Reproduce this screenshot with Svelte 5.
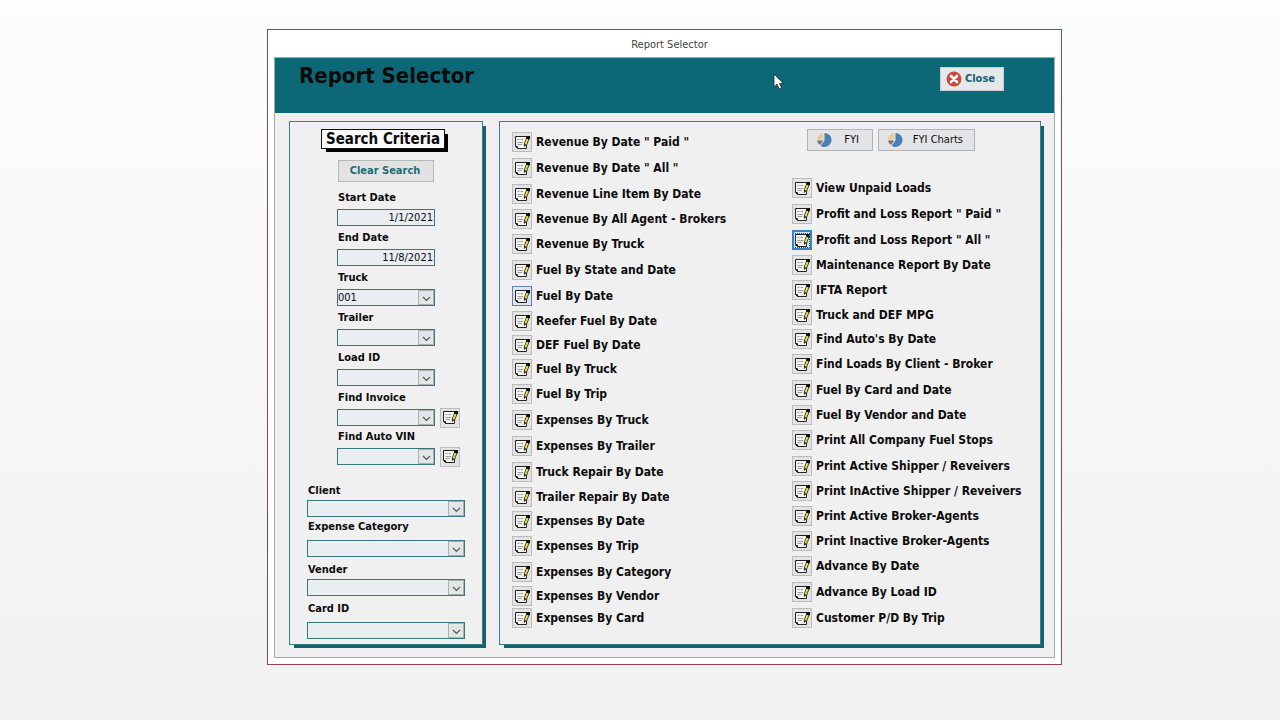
<script>
  const filters = [
    { id: 'start', label: 'Start Date', date: '1/1/2021' },
    { id: 'end', label: 'End Date', date: '11/8/2021' },
    { id: 'truck', label: 'Truck', value: '001' },
    { id: 'trailer', label: 'Trailer', value: '' },
    { id: 'load', label: 'Load ID', value: '' },
    { id: 'invoice', label: 'Find Invoice', value: '', find: true },
    { id: 'vin', label: 'Find Auto VIN', value: '', find: true }
  ];

  const categories = [
    { id: 'client', label: 'Client' },
    { id: 'category', label: 'Expense Category', loose: true },
    { id: 'vender', label: 'Vender' },
    { id: 'card', label: 'Card ID', loose: true }
  ];

  // h is the row density: n = normal, t = tight, x = extra tight
  const left = [
    { t: 'Revenue By Date " Paid "', h: 'n' },
    { t: 'Revenue By Date " All "', h: 'n' },
    { t: 'Revenue Line Item By Date', h: 'n' },
    { t: 'Revenue By All Agent - Brokers', h: 't' },
    { t: 'Revenue By Truck', h: 'n' },
    { t: 'Fuel By State and Date', h: 'n' },
    { t: 'Fuel By Date', h: 'n', state: 'recent' },
    { t: 'Reefer Fuel By Date', h: 't' },
    { t: 'DEF Fuel By Date', h: 't' },
    { t: 'Fuel By Truck', h: 't' },
    { t: 'Fuel By Trip', h: 'n' },
    { t: 'Expenses By Truck', h: 'n' },
    { t: 'Expenses By Trailer', h: 'n' },
    { t: 'Truck Repair By Date', h: 'n' },
    { t: 'Trailer Repair By Date', h: 't' },
    { t: 'Expenses By Date', h: 't' },
    { t: 'Expenses By Trip', h: 'n' },
    { t: 'Expenses By Category', h: 'n' },
    { t: 'Expenses By Vendor', h: 'x' },
    { t: 'Expenses By Card', h: 'x' }
  ];

  const right = [
    { t: 'View Unpaid Loads', h: 'n' },
    { t: 'Profit and Loss Report " Paid "', h: 'n' },
    { t: 'Profit and Loss Report " All "', h: 'n', state: 'focused' },
    { t: 'Maintenance Report By Date', h: 't' },
    { t: 'IFTA Report', h: 'n' },
    { t: 'Truck and DEF MPG', h: 't' },
    { t: "Find Auto's By Date", h: 't' },
    { t: 'Find Loads By Client - Broker', h: 'n' },
    { t: 'Fuel By Card and Date', h: 'n' },
    { t: 'Fuel By Vendor and Date', h: 't' },
    { t: 'Print All Company Fuel Stops', h: 'n' },
    { t: 'Print Active Shipper / Reveivers', h: 'n' },
    { t: 'Print InActive Shipper / Reveivers', h: 't' },
    { t: 'Print Active Broker-Agents', h: 'n' },
    { t: 'Print Inactive Broker-Agents', h: 't' },
    { t: 'Advance By Date', h: 'n' },
    { t: 'Advance By Load ID', h: 'n' },
    { t: 'Customer P/D By Trip', h: 'n' }
  ];
</script>

{#snippet report()}
  <svg class="glyph" viewBox="0 0 17 17" width="17" height="17" aria-hidden="true">
    <path d="M1.5 2.5H12.5V14.5H3.5L1.5 12.5Z" fill="#f4f4f1" stroke="#222" />
    <path d="M1.5 12.5H3.5V14.5" fill="none" stroke="#222" />
    <path d="M3.5 5.5H5.5M6.5 5.5H9M3.5 8.5H9M3.5 10.5H8" stroke="#9a9aa0" />
    <path d="M14 4L11.4 10.5" stroke="#3a3a20" stroke-width="3.4" />
    <path d="M13.7 4.6L11.5 10.3" stroke="#e9e44c" stroke-width="1.8" />
    <path d="M12.5 2H16V5L14.8 5.6L12.2 4.4Z" fill="#0a0a0a" />
    <path d="M9.8 9.8L12.4 11L10 13Z" fill="#222" />
  </svg>
{/snippet}

{#snippet pie()}
  <svg viewBox="0 0 16 16" width="16" height="16" aria-hidden="true">
    <path d="M8.5 1A7 7 0 1 1 4.6 13.8L8.5 8.5Z" fill="#4b7eb4" />
    <path d="M7.3 7.4V1A6.6 6.6 0 0 0 1 7.4Z" fill="#e6cc98" />
    <path d="M1 8.6H7.3L3.9 13A7 7 0 0 1 1 8.6Z" fill="#77707a" />
  </svg>
{/snippet}

{#snippet combo(id, value)}
  <span class="combo">
    <select {id}><option>{value}</option></select>
    <span class="drop">
      <svg viewBox="0 0 9 6" width="9" height="6" aria-hidden="true">
        <path d="M1 1L4.5 4.5L8 1" fill="none" stroke="#50585a" stroke-width="1.2" />
      </svg>
    </span>
  </span>
{/snippet}

{#snippet rows(items)}
  <ul>
    {#each items as item}
      <li class={item.h}>
        <button class="icon {item.state ?? ''}" aria-label={item.t}>{@render report()}</button>
        <span>{item.t}</span>
      </li>
    {/each}
  </ul>
{/snippet}

<main>
  <section class="window">
    <div class="caption">Report Selector</div>
    <div class="form">
      <header>
        <h1>Report Selector</h1>
        <button class="close">
          <svg viewBox="0 0 16 16" width="16" height="16" aria-hidden="true">
            <circle cx="8" cy="8" r="7.5" fill="#c8493e" />
            <path d="M5 5L11 11M11 5L5 11" stroke="#fff" stroke-width="2.6" stroke-linecap="round" />
          </svg>
          Close
        </button>
        <svg class="pointer" viewBox="0 0 12 18" width="12" height="18" aria-hidden="true">
          <path d="M1 1V14L4 11.2L6.2 16L8.6 15L6.5 10.4H10.5Z" fill="#fff" stroke="#222" stroke-width="0.8" />
        </svg>
      </header>

      <div class="content">
        <aside class="panel search">
          <h2>Search Criteria</h2>
          <button class="clear">Clear Search</button>
          <div class="filters">
            {#each filters as f}
              <div class="field" class:compact={f.find}>
                <label for={f.id}>{f.label}</label>
                <div class="line">
                  {#if f.date}
                    <input id={f.id} type="text" value={f.date} />
                  {:else}
                    {@render combo(f.id, f.value)}
                  {/if}
                  {#if f.find}
                    <button class="icon" aria-label={f.label}>{@render report()}</button>
                  {/if}
                </div>
              </div>
            {/each}
          </div>
          <div class="categories">
            {#each categories as c}
              <div class="category" class:loose={c.loose}>
                <label for={c.id}>{c.label}</label>
                {@render combo(c.id, '')}
              </div>
            {/each}
          </div>
        </aside>

        <section class="panel reports">
          <div>{@render rows(left)}</div>
          <div>
            <div class="charts">
              <button>{@render pie()}<span>FYI</span></button>
              <button class="wide">{@render pie()}<span>FYI Charts</span></button>
            </div>
            {@render rows(right)}
          </div>
        </section>
      </div>
    </div>
  </section>
</main>

<style>
  :global(body) {
    margin: 0;
    background: linear-gradient(#fdfdfd, #f1f1f1);
  }
  * {
    box-sizing: border-box;
  }
  main {
    min-height: 100vh;
    padding: 29px 218px 55px 267px;
    font: 12px/16px Tahoma, 'DejaVu Sans Condensed', 'Noto Sans', sans-serif;
    color: #0b0b0b;
  }
  button,
  input,
  select {
    font: inherit;
    color: inherit;
    margin: 0;
    padding: 0;
    border-radius: 0;
  }
  .window {
    min-width: 780px;
    padding: 0 6px 6px;
    border: 1px solid #9a3f56;
    background: #fff;
  }
  .caption {
    height: 27px;
    padding-top: 7px;
    padding-left: 10px;
    text-align: center;
    font-size: 11px;
    color: #444;
  }
  .form {
    border: 1px solid #a3a8a8;
    background: #efefef;
  }
  header {
    position: relative;
    display: flex;
    justify-content: space-between;
    align-items: flex-start;
    height: 55px;
    padding: 4px 50px 0 24px;
    background: #0c6876;
  }
  h1 {
    margin: 0;
    font-size: 22px;
    line-height: 28px;
  }
  .close {
    display: flex;
    align-items: center;
    gap: 3px;
    height: 24px;
    margin-top: 5px;
    padding: 0 8px 0 5px;
    border: 1px solid #c7d0d2;
    background: #e5e7e8;
    color: #14616c;
    font-size: 11px;
    font-weight: bold;
  }
  .pointer {
    position: absolute;
    left: 498px;
    top: 15px;
  }
  .content {
    display: flex;
    gap: 16px;
    padding: 8px 13px 12px 14px;
  }
  .panel {
    border: 1px solid #39818a;
    background: #f0f0f0;
    box-shadow: 4px 4px 0 -1px #15616c;
  }
  .search {
    flex: 0 0 194px;
    display: flex;
    flex-direction: column;
    padding: 7px 17px 5px;
  }
  h2 {
    align-self: center;
    margin: 0 6px 11px 0;
    padding: 0 4px;
    border: 1px solid #111;
    background: #fafafa;
    box-shadow: 4px 4px 0 -1px #000;
    font-size: 15px;
    line-height: 18px;
    white-space: nowrap;
  }
  .clear {
    width: 96px;
    height: 22px;
    margin-left: 31px;
    padding-right: 2px;
    border: 1px solid #b4b8bb;
    background: #e2e2e2;
    color: #1a6c76;
    font-size: 11px;
    font-weight: bold;
  }
  label {
    display: block;
    font-size: 11px;
    font-weight: bold;
    line-height: 16px;
  }
  .filters {
    margin: 8px 0 0 30px;
  }
  .field {
    height: 40px;
  }
  .field.compact {
    height: 39px;
  }
  .field label {
    padding-left: 1px;
    margin-bottom: 3px;
  }
  .line {
    display: flex;
    align-items: center;
    gap: 5px;
    height: 17px;
  }
  .line input,
  .line .combo {
    width: 98px;
  }
  input,
  select {
    display: block;
    width: 100%;
    height: 17px;
    border: 1px solid #39767d;
    background: #e9eef0;
    font-size: 11px;
    line-height: 15px;
    appearance: none;
  }
  input {
    padding-right: 1px;
    text-align: right;
  }
  .combo {
    position: relative;
    display: block;
  }
  .drop {
    position: absolute;
    top: 1px;
    right: 1px;
    bottom: 1px;
    width: 16px;
    display: grid;
    place-items: center;
    padding-top: 3px;
    border: 1px solid #a9b2b2;
    background: #e4e6e6;
    pointer-events: none;
  }
  .categories {
    margin-top: 15px;
  }
  .category {
    margin-bottom: 2px;
  }
  .category label {
    padding-left: 1px;
    margin-bottom: 1px;
  }
  .category.loose {
    margin-bottom: 5px;
  }
  .category.loose label {
    margin-bottom: 5px;
  }
  .category:nth-child(3) {
    margin-bottom: 5px;
  }
  .category:last-child {
    margin-bottom: 0;
  }
  .reports {
    flex: 1;
    display: grid;
    grid-template-columns: 280fr 248fr;
    padding: 7px 0 0 12px;
  }
  ul {
    list-style: none;
    margin: 0;
    padding: 0;
  }
  li {
    display: flex;
    align-items: center;
    gap: 4px;
    height: 26px;
    font-weight: bold;
    white-space: nowrap;
  }
  li.t {
    height: 24px;
  }
  li.x {
    height: 22px;
  }
  li span {
    padding-bottom: 1px;
  }
  .icon {
    flex: none;
    display: grid;
    place-items: center;
    width: 20px;
    height: 20px;
    border: 1px solid #bcbcbc;
    background: #e3e3e3;
  }
  .icon.recent {
    border-color: #6382ab;
    background: #dce6f2;
  }
  .icon.focused {
    border: 2px solid #3c82bd;
    background: #cfe2f2;
  }
  .focused .glyph {
    outline: 1px dotted #24486a;
    outline-offset: -2px;
  }
  .charts {
    display: flex;
    gap: 5px;
    padding: 0 0 24px 15px;
  }
  .charts button {
    display: flex;
    align-items: center;
    width: 66px;
    height: 22px;
    padding: 0 13px 0 8px;
    border: 1px solid #b0b4b7;
    background: #e3e4e5;
    font-size: 11px;
  }
  .charts button.wide {
    width: 97px;
    padding-right: 11px;
  }
  .charts span {
    margin-left: auto;
  }
</style>
